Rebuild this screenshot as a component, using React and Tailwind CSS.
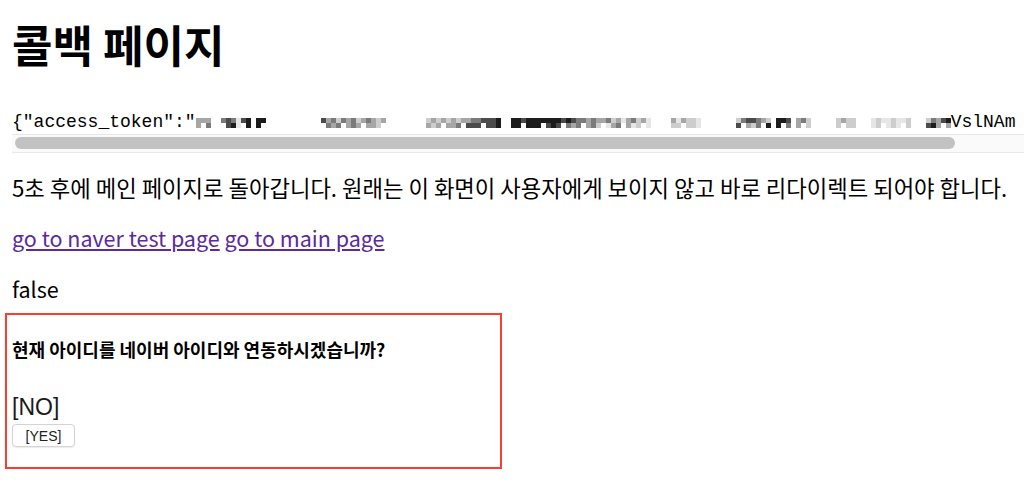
const TOP =
  "333..454156.66..........." +
  "5342434234323........" +
  "232323233445556.." +
  "665666666656544343" +
  "3423134231...." +
  "313221......." +
  "2455432.665.342....." +
  "2322...12112112...24356";

const SHADES = {
  "1": "#e6e6e6",
  "2": "#cdcdcd",
  "3": "#a6a6a6",
  "4": "#7b7b7b",
  "5": "#4b4b4b",
  "6": "#1c1c1c",
};

function Mosaic() {
  const cells = TOP.split("");
  return (
    <span className="inline-flex align-[4px]">
      {cells.map((c, i) => {
        const below = cells[(i + 3) % cells.length];
        const top = SHADES[c];
        const bottom = c === "." ? null : SHADES[below] || SHADES[c];
        return (
          <span key={i} className="flex w-[5px] flex-col">
            <span className="h-[5px]" style={{ background: top || "transparent" }} />
            <span className="h-[5px]" style={{ background: i % 4 === 1 ? "transparent" : bottom || "transparent" }} />
          </span>
        );
      })}
    </span>
  );
}

export default function App() {
  return (
    <div className="min-h-[488px] bg-white pt-[18px] font-['Noto_Sans_CJK_KR',sans-serif] text-black">
      <h1 className="ml-[12px] text-[44px] font-bold leading-[52px]">콜백 페이지</h1>

      <div className="mt-[42px] overflow-hidden pl-[12px]">
        <pre className="whitespace-pre font-['Liberation_Mono',monospace] text-[18px] leading-[20px]">
          {'{"access_token":"'}
          <Mosaic />
          {"VslNAm"}
        </pre>
        <div className="mt-[2px] h-[19px] border-y border-[#e8e8e8] bg-[#fafafa] py-[2px] pl-[3px]">
          <div className="h-[12px] w-[940px] rounded-full bg-[#c2c2c2]" />
        </div>
      </div>

      <p className="ml-[12px] mt-[21px] text-[22.25px] leading-[26px]">
        5초 후에 메인 페이지로 돌아갑니다. 원래는 이 화면이 사용자에게 보이지 않고 바로 리다이렉트 되어야 합니다.
      </p>

      <p className="ml-[12px] mt-[25px] text-[21.5px] leading-[26px]">
        <a href="#" className="text-[#5b2a9e] underline">
          go to naver test page
        </a>{" "}
        <a href="#" className="text-[#5b2a9e] underline">
          go to main page
        </a>
      </p>

      <p className="ml-[12px] mt-[25px] text-[21.5px] leading-[26px]">false</p>

      <div className="ml-[5px] mt-[11px] w-[497px] border-2 border-[#ff3b30] pb-[20px] pl-[5px] pt-[22px]">
        <p className="text-[18px] font-bold leading-[24px]">현재 아이디를 네이버 아이디와 연동하시겠습니까?</p>
        <p className="mt-[33px] font-['Liberation_Sans',sans-serif] text-[23px] leading-[26px] text-[#1a1a1a]">[NO]</p>
        <button className="mt-[4px] h-[23px] w-[63px] rounded-[4px] border border-[#d4d4d4] bg-white font-['Liberation_Sans',sans-serif] text-[14px] leading-[20px] text-[#222] shadow-[0_1px_1px_rgba(0,0,0,0.08)]">
          [YES]
        </button>
      </div>
    </div>
  );
}
